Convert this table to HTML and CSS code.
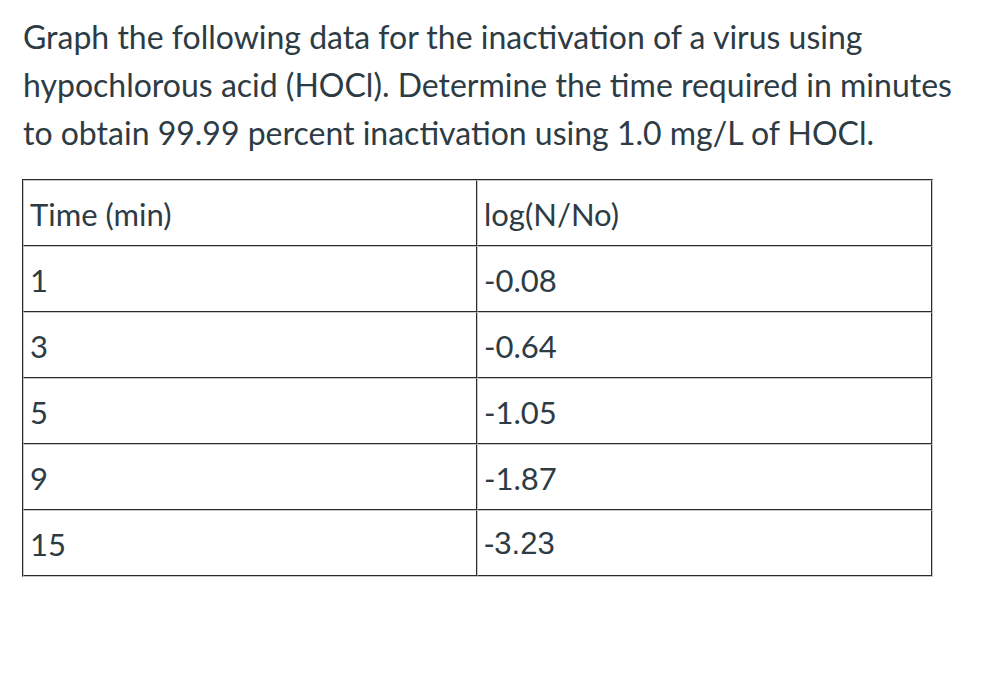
FILE: index.html
```html
<!DOCTYPE html>
<html>
<head>
<meta charset="utf-8">
<link rel="stylesheet" href="styles.css">
</head>
<body>
<div class="content">
<p class="question">Graph the following data for the inactivation of a virus using hypochlorous acid (HOCl). Determine the time required in minutes to obtain 99.99 percent inactivation using 1.0 mg/L of HOCl.</p>
<table class="data">
<tbody>
<tr><td>Time (min)</td><td>log(N/No)</td></tr>
<tr><td>1</td><td>-0.08</td></tr>
<tr><td>3</td><td>-0.64</td></tr>
<tr><td>5</td><td>-1.05</td></tr>
<tr><td>9</td><td>-1.87</td></tr>
<tr><td>15</td><td class="arial">-3.23</td></tr>
</tbody>
</table>
</div>
</body>
</html>
```
FILE: styles.css
```css
html, body {
  margin: 0;
  padding: 0;
  background: #ffffff;
}
.content {
  padding: 13px 0 0 23px;
  font-family: Lato, "Liberation Sans", sans-serif;
  color: #2d3b45;
  font-size: 31px;
  line-height: 48px;
}
.question {
  margin: 0 0 22px 0;
  width: 940px;
  font-size: 32px;
}
.data {
  border-collapse: separate;
  border-spacing: 0;
  width: 911px;
  margin-left: -1px;
  border-top: 1px solid #2a2a2a;
  border-left: 1px solid #2a2a2a;
  border-right: 1px solid #c8c8c8;
  border-bottom: 1px solid #c8c8c8;
}
.data td {
  height: 62px;
  padding: 2px 0 0 6px;
  vertical-align: middle;
  border-top: 1px solid #c8c8c8;
  border-left: 1px solid #c8c8c8;
  border-right: 1px solid #2a2a2a;
  border-bottom: 1px solid #2a2a2a;
  line-height: 30px;
}
.data td:first-child {
  width: 446px;
}
.data td.arial {
  font-family: "Liberation Sans", Arial, sans-serif;
}
```
